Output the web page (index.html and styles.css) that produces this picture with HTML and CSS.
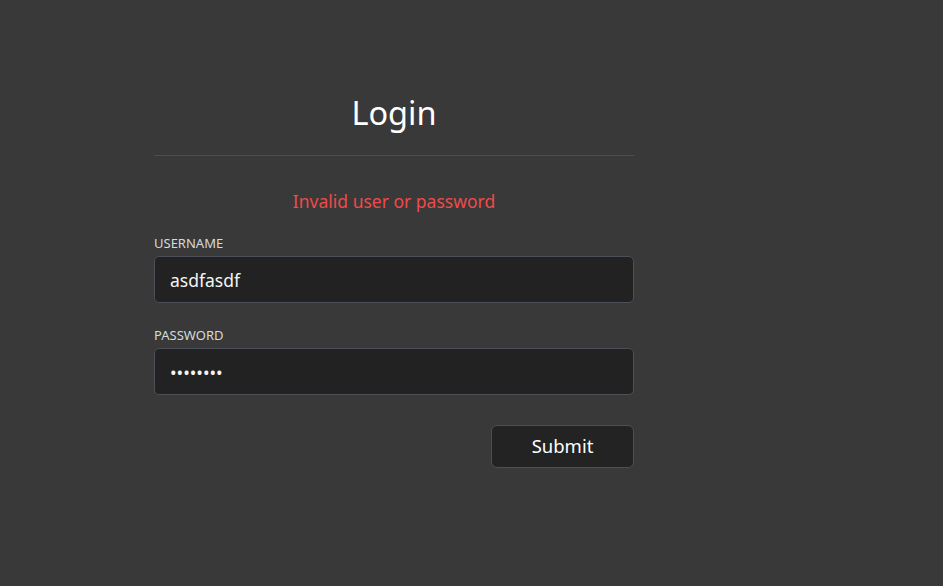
FILE: index.html
```html
<!DOCTYPE html>
<html lang="en">
<head>
  <meta charset="UTF-8" />
  <meta name="viewport" content="width=device-width, initial-scale=1" />
  <title>Login</title>
  <link rel="stylesheet" href="styles.css">
</head>
<body>
  <div class="login">
    <h1 class="login-title">Login</h1>
    <p class="login-error">Invalid user or password</p>
    <form class="login-form">
      <label class="field">
        <span class="field-label">USERNAME</span>
        <input class="field-input" type="text" value="asdfasdf">
      </label>
      <label class="field">
        <span class="field-label">PASSWORD</span>
        <input class="field-input" type="password" value="asdfasdf">
      </label>
      <div class="actions">
        <button class="submit" type="button">Submit</button>
      </div>
    </form>
  </div>
</body>
</html>
```

FILE: styles.css
```css
* {
  box-sizing: border-box;
}
body, html {
  margin: 0;
  padding: 0;
  height: 100vh;
  overflow: hidden;
  background: #383938;
  font-family: 'Noto Sans', 'Open Sans', sans-serif;
  color: #fff;
}

.login {
  width: 480px;
  margin-left: 154px;
  padding-top: 89px;
}

.login-title {
  margin: 0;
  padding-bottom: 18px;
  border-bottom: 1px solid #4c4d4c;
  text-align: center;
  font-size: 32.5px;
  font-weight: 400;
  line-height: 48px;
}

.login-error {
  margin: 32px 0 0;
  text-align: center;
  color: #f04a4a;
  font-size: 17.5px;
  line-height: 26px;
}

.login-form {
  margin-top: 21px;
}

.field {
  display: flex;
  flex-direction: column;
  gap: 4px;
  margin-bottom: 24px;
}

.field-label {
  font-size: 13px;
  line-height: 17px;
  color: #d6d9de;
}

.field-input {
  height: 47px;
  padding: 0 15px;
  background: #222222;
  border: 1px solid #4a4f58;
  border-radius: 5px;
  color: #f4f4f4;
  font-family: inherit;
  font-size: 17.5px;
  outline: none;
}

.actions {
  display: flex;
  justify-content: flex-end;
  padding-top: 6px;
}

.submit {
  width: 143px;
  height: 43px;
  padding: 0 0 2px;
  background: #232323;
  border: 1px solid #4a4f58;
  border-radius: 6px;
  color: #fff;
  font-family: inherit;
  font-size: 18.5px;
  cursor: pointer;
}
```
